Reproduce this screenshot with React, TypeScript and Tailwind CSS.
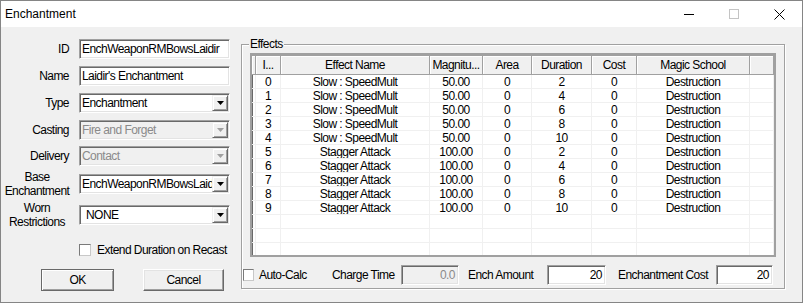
import React from "react";

const NARROW = "font-['Liberation_Sans',Arial,sans-serif] text-[12px] tracking-[-0.55px] leading-[14px] whitespace-nowrap";

function Sunken({ className = "", children, disabled = false }: { className?: string; children?: React.ReactNode; disabled?: boolean }) {
  return (
    <div
      className={`border border-t-[#a0a0a0] border-l-[#a0a0a0] border-r-white border-b-white shadow-[inset_1px_1px_0_#696969,inset_-1px_-1px_0_#e3e3e3] ${disabled ? "bg-[#f0f0f0]" : "bg-white"} ${className}`}
    >
      {children}
    </div>
  );
}

function Arrow({ disabled = false }: { disabled?: boolean }) {
  return (
    <div className="w-[16px] h-[16px] mr-[1px] shrink-0 bg-[#f0f0f0] border border-t-[#f0f0f0] border-l-[#f0f0f0] border-r-[#696969] border-b-[#696969] shadow-[inset_1px_1px_0_white,inset_-1px_-1px_0_#a0a0a0] flex items-center justify-center">
      <svg width="7" height="4" viewBox="0 0 7 4">
        <polygon points="0,0 7,0 3.5,4" fill={disabled ? "#a0a0a0" : "#000"} />
      </svg>
    </div>
  );
}

function Select({ value, disabled = false, pad = "pl-[2px]" }: { value: string; disabled?: boolean; pad?: string }) {
  return (
    <Sunken disabled={disabled} className="w-[151px] h-[20px] flex items-center">
      <div className={`flex-1 overflow-hidden whitespace-nowrap ${pad} ${disabled ? "text-[#8a8a8a]" : "text-black"}`}>{value}</div>
      <Arrow disabled={disabled} />
    </Sunken>
  );
}

function Label({ children }: { children: React.ReactNode }) {
  return <div className="w-[68px] text-right mr-[10px] shrink-0">{children}</div>;
}

function Label2({ a, b }: { a: string; b: string }) {
  return (
    <div className="w-[72px] text-center mr-[6px] shrink-0 leading-[14px]">
      <div>{a}</div>
      <div>{b}</div>
    </div>
  );
}

function Checkbox() {
  return (
    <div className="w-[12px] h-[12px] bg-white border border-t-[#7a7a7a] border-l-[#7a7a7a] border-r-[#c8c8c8] border-b-[#c8c8c8] shrink-0" />
  );
}

const cols = [4, 25, 149, 53, 49, 60, 45, 113, 24];
const headers = ["", "I...", "Effect Name", "Magnitu...", "Area", "Duration", "Cost", "Magic School", ""];

const rows: string[][] = [
  ["", "0", "Slow : SpeedMult", "50.00", "0", "2", "0", "Destruction", ""],
  ["", "1", "Slow : SpeedMult", "50.00", "0", "4", "0", "Destruction", ""],
  ["", "2", "Slow : SpeedMult", "50.00", "0", "6", "0", "Destruction", ""],
  ["", "3", "Slow : SpeedMult", "50.00", "0", "8", "0", "Destruction", ""],
  ["", "4", "Slow : SpeedMult", "50.00", "0", "10", "0", "Destruction", ""],
  ["", "5", "Stagger Attack", "100.00", "0", "2", "0", "Destruction", ""],
  ["", "6", "Stagger Attack", "100.00", "0", "4", "0", "Destruction", ""],
  ["", "7", "Stagger Attack", "100.00", "0", "6", "0", "Destruction", ""],
  ["", "8", "Stagger Attack", "100.00", "0", "8", "0", "Destruction", ""],
  ["", "9", "Stagger Attack", "100.00", "0", "10", "0", "Destruction", ""],
  ["", "", "", "", "", "", "", "", ""],
  ["", "", "", "", "", "", "", "", ""],
  ["", "", "", "", "", "", "", "", ""],
];

function Table() {
  return (
    <div className="w-[526px] h-[204px] border-2 border-[#a0a0a0] shadow-[inset_1px_1px_0_#696969] bg-white overflow-hidden">
      <div className="flex h-[20px]">
        {headers.map((h, i) => (
          <div
            key={i}
            style={{ width: cols[i] }}
            className="h-[20px] shrink-0 bg-[#f0f0f0] border-r border-b border-t border-[#a0a0a0] shadow-[inset_1px_1px_0_white] flex items-center justify-center overflow-hidden whitespace-nowrap"
          >
            {h}
          </div>
        ))}
      </div>
      {rows.map((r, ri) => (
        <div key={ri} className="flex h-[14px]">
          {r.map((c, ci) => (
            <div
              key={ci}
              style={{ width: cols[ci] }}
              className="h-[14px] shrink-0 border-r border-b border-[#f0f0f0] flex items-center justify-center whitespace-nowrap overflow-hidden"
            >
              {c}
            </div>
          ))}
        </div>
      ))}
    </div>
  );
}

export default function App() {
  return (
    <div className="w-[803px] h-[303px] border border-[#858585] flex flex-col overflow-hidden bg-[#f0f0f0] text-black">
      {/* Title bar */}
      <div className="h-[26px] bg-white flex items-center shrink-0 relative">
        <div className="pl-[4px] font-['Liberation_Sans',sans-serif] text-[12px] leading-none text-black">Enchantment</div>
        <div className="ml-auto flex items-center h-full">
          <div className="w-[45px] h-full flex items-center justify-center">
            <svg width="10" height="10" viewBox="0 0 10 10">
              <line x1="0" y1="5.5" x2="10" y2="5.5" stroke="#000" strokeWidth="1" />
            </svg>
          </div>
          <div className="w-[45px] h-full flex items-center justify-center">
            <svg width="10" height="10" viewBox="0 0 10 10">
              <rect x="0.5" y="0.5" width="9" height="9" fill="none" stroke="#c4c4c4" strokeWidth="1" />
            </svg>
          </div>
          <div className="w-[46px] h-full flex items-center justify-center">
            <svg width="11" height="11" viewBox="0 0 11 11">
              <line x1="0.5" y1="0.5" x2="10.5" y2="10.5" stroke="#000" strokeWidth="1" />
              <line x1="10.5" y1="0.5" x2="0.5" y2="10.5" stroke="#000" strokeWidth="1" />
            </svg>
          </div>
        </div>
      </div>

      {/* Body */}
      <div className={`flex flex-1 ${NARROW}`}>
        {/* Left panel */}
        <div className="w-[240px] shrink-0 flex flex-col">
          <div className="flex items-center mt-[12px]">
            <Label>ID</Label>
            <Sunken className="w-[151px] h-[20px] flex items-center pl-[2px] whitespace-nowrap overflow-hidden">EnchWeaponRMBowsLaidir</Sunken>
          </div>
          <div className="flex items-center mt-[7px]">
            <Label>Name</Label>
            <Sunken className="w-[151px] h-[20px] flex items-center pl-[2px] whitespace-nowrap overflow-hidden">Laidir's Enchantment</Sunken>
          </div>
          <div className="flex items-center mt-[7px]">
            <Label>Type</Label>
            <Select value="Enchantment" />
          </div>
          <div className="flex items-center mt-[7px]">
            <Label>Casting</Label>
            <Select value="Fire and Forget" disabled />
          </div>
          <div className="flex items-center mt-[6px]">
            <Label>Delivery</Label>
            <Select value="Contact" disabled />
          </div>
          <div className="flex items-center mt-[8px] h-[20px]">
            <Label2 a="Base" b="Enchantment" />
            <Select value="EnchWeaponRMBowsLaidir" />
          </div>
          <div className="flex items-center mt-[11px] h-[20px]">
            <Label2 a="Worn" b="Restrictions" />
            <Select value="NONE" pad="pl-[6px]" />
          </div>
          <div className="flex items-center mt-[19px] ml-[78px] h-[12px]">
            <Checkbox />
            <div className="ml-[6px]">Extend Duration on Recast</div>
          </div>
          <div className="flex mt-[13px] ml-[40px]">
            <div className="w-[73px] h-[22px] bg-[#f0f0f0] border border-[#696969] shadow-[inset_1px_1px_0_white,inset_-1px_-1px_0_#a0a0a0] flex items-center justify-center">
              OK
            </div>
            <div className="w-[81px] h-[22px] ml-[29px] bg-[#f0f0f0] border border-t-white border-l-white border-r-[#696969] border-b-[#696969] shadow-[inset_-1px_-1px_0_#a0a0a0,inset_1px_1px_0_#e3e3e3] flex items-center justify-center">
              Cancel
            </div>
          </div>
        </div>

        {/* Effects group */}
        <div className="relative mt-[17px] w-[544px] h-[245px] border border-[#a0a0a0] shadow-[inset_1px_1px_0_white,1px_1px_0_white] flex flex-col">
          <div className="absolute left-[7px] top-[-8px] px-[1px] bg-[#f0f0f0] leading-[14px]">Effects</div>
          <div className="mt-[8px] ml-[8px]">
            <Table />
          </div>
          <div className="flex items-center mt-[8px] h-[20px]">
            <div className="ml-[1px] w-[11px] h-[12px] bg-white border border-t-[#7a7a7a] border-l-[#7a7a7a] border-r-[#c8c8c8] border-b-[#c8c8c8] shrink-0" />
            <div className="ml-[5px] w-[73px] shrink-0">Auto-Calc</div>
            <div className="w-[69px] shrink-0">Charge Time</div>
            <Sunken disabled className="w-[58px] h-[20px] shrink-0 flex items-center justify-end pr-[3px] text-[#8a8a8a]">0.0</Sunken>
            <div className="ml-[9px] w-[79px] shrink-0">Ench Amount</div>
            <Sunken className="w-[59px] h-[20px] shrink-0 flex items-center justify-end pr-[3px]">20</Sunken>
            <div className="ml-[12px] w-[98px] shrink-0">Enchantment Cost</div>
            <Sunken className="w-[57px] h-[20px] shrink-0 flex items-center justify-end pr-[3px]">20</Sunken>
          </div>
        </div>
      </div>
    </div>
  );
}
